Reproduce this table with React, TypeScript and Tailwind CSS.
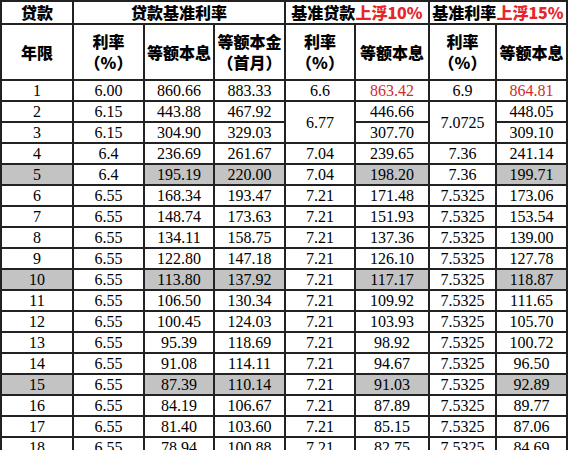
const rows: (string | null)[][] = [
  ["1", "6.00", "860.66", "883.33", "6.6", "863.42", "6.9", "864.81"],
  ["2", "6.15", "443.88", "467.92", "6.77", "446.66", "7.0725", "448.05"],
  ["3", "6.15", "304.90", "329.03", null, "307.70", null, "309.10"],
  ["4", "6.4", "236.69", "261.67", "7.04", "239.65", "7.36", "241.14"],
  ["5", "6.4", "195.19", "220.00", "7.04", "198.20", "7.36", "199.71"],
  ["6", "6.55", "168.34", "193.47", "7.21", "171.48", "7.5325", "173.06"],
  ["7", "6.55", "148.74", "173.63", "7.21", "151.93", "7.5325", "153.54"],
  ["8", "6.55", "134.11", "158.75", "7.21", "137.36", "7.5325", "139.00"],
  ["9", "6.55", "122.80", "147.18", "7.21", "126.10", "7.5325", "127.78"],
  ["10", "6.55", "113.80", "137.92", "7.21", "117.17", "7.5325", "118.87"],
  ["11", "6.55", "106.50", "130.34", "7.21", "109.92", "7.5325", "111.65"],
  ["12", "6.55", "100.45", "124.03", "7.21", "103.93", "7.5325", "105.70"],
  ["13", "6.55", "95.39", "118.69", "7.21", "98.92", "7.5325", "100.72"],
  ["14", "6.55", "91.08", "114.11", "7.21", "94.67", "7.5325", "96.50"],
  ["15", "6.55", "87.39", "110.14", "7.21", "91.03", "7.5325", "92.89"],
  ["16", "6.55", "84.19", "106.67", "7.21", "87.89", "7.5325", "89.77"],
  ["17", "6.55", "81.40", "103.60", "7.21", "85.15", "7.5325", "87.06"],
  ["18", "6.55", "78.94", "100.88", "7.21", "82.75", "7.5325", "84.69"],
];

// rows whose year, 等额本息 and 等额本金 cells are shaded
const shaded = new Set(["5", "10", "15"]);
const shadedCols = new Set([0, 2, 3, 5, 7]);
const widths = [72, 71, 70, 71, 70, 74, 67, 71];

const cjk = "font-['Noto_Sans_CJK_SC',sans-serif] font-black text-[16px] leading-[21px] text-black";
const cell = "border-2 border-[#222] text-center p-0 align-middle";

function RateHead() {
  return (
    <th className={`${cell} ${cjk}`}>
      利率
      <br />
      （%）
    </th>
  );
}

export default function App() {
  return (
    <div className="w-[568px] h-[450px] overflow-hidden bg-white">
      <table className="table-fixed border-collapse w-[566px]">
        <colgroup>
          {widths.map((w, i) => (
            <col key={i} style={{ width: w }} />
          ))}
        </colgroup>
        <thead>
          <tr className="h-[22px]">
            <th className={`${cell} ${cjk}`}>贷款</th>
            <th colSpan={3} className={`${cell} ${cjk}`}>贷款基准利率</th>
            <th colSpan={2} className={`${cell} ${cjk}`}>
              基准贷款<span className="text-[#e8262a]">上浮10%</span>
            </th>
            <th colSpan={2} className={`${cell} ${cjk}`}>
              基准利率<span className="text-[#e8262a]">上浮15%</span>
            </th>
          </tr>
          <tr className="h-[56px]">
            <th className={`${cell} ${cjk}`}>年限</th>
            <RateHead />
            <th className={`${cell} ${cjk}`}>等额本息</th>
            <th className={`${cell} ${cjk}`}>
              等额本金
              <br />
              （首月）
            </th>
            <RateHead />
            <th className={`${cell} ${cjk}`}>等额本息</th>
            <RateHead />
            <th className={`${cell} ${cjk}`}>等额本息</th>
          </tr>
        </thead>
        <tbody className="font-['Liberation_Serif',serif] text-[16px] leading-[17px] text-black">
          {rows.map((r) => (
            <tr key={r[0]} className="h-[21px]">
              {r.map((v, i) => {
                if (v === null) return null;
                const span = r[0] === "2" && (i === 4 || i === 6) ? 2 : 1;
                const gray = shaded.has(r[0] as string) && shadedCols.has(i);
                const red = r[0] === "1" && (i === 5 || i === 7);
                return (
                  <td
                    key={i}
                    rowSpan={span}
                    className={`${cell} ${gray ? "bg-[#c3c3c3]" : "bg-white"} ${red ? "text-[#d42a2a]" : ""}`}
                  >
                    {v}
                  </td>
                );
              })}
            </tr>
          ))}
        </tbody>
      </table>
    </div>
  );
}
